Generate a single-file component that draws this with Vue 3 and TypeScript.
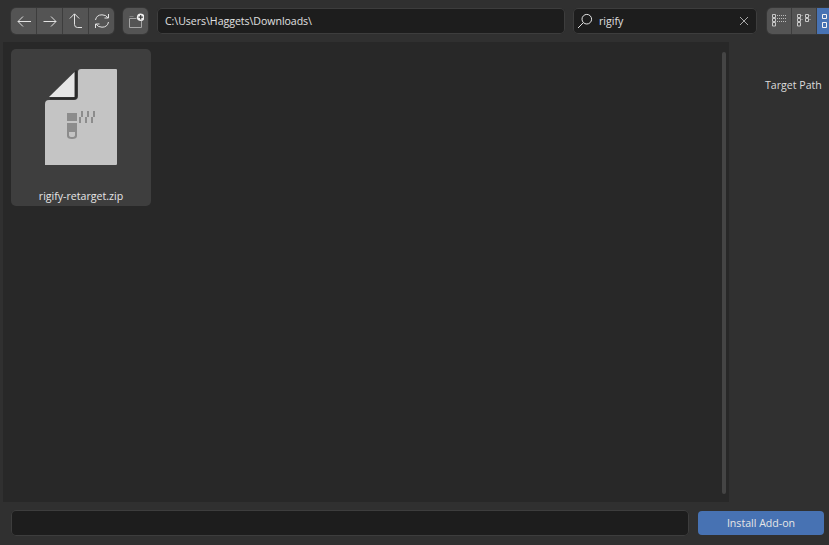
<script setup lang="ts">
const path = 'C:\\Users\\Haggets\\Downloads\\'
</script>

<template>
  <div class="app">
    <header class="topbar">
      <div class="group nav">
        <button class="btn" aria-label="Back">
          <svg class="icon" width="16" height="16" viewBox="0 0 16 16"><path d="M15 8.500H2M7 3.500 2 8.500l5 5" /></svg>
        </button>
        <button class="btn" aria-label="Forward">
          <svg class="icon" width="16" height="16" viewBox="0 0 16 16"><path d="M1.500 8.500h12.500M9 3.500l5 5-5 5" /></svg>
        </button>
        <button class="btn" aria-label="Parent">
          <svg class="icon" width="16" height="16" viewBox="0 0 16 16"><path d="M14 14.500H9.500Q6.500 14.500 6.500 11.500V1M1.800 5.500 6.500 .800 11.200 5.500" /></svg>
        </button>
        <button class="btn" aria-label="Refresh">
          <svg class="icon" width="16" height="16" viewBox="0 0 16 16"><path d="M1.500 7Q2.500 1.800 8 1.800q4 0 6 3M14.500 1v4h-4M14.500 9Q13.500 14.200 8 14.200q-4 0-6-3M1.500 15v-4h4" /></svg>
        </button>
      </div>
      <button class="btn single" aria-label="New folder">
        <svg class="icon" width="16" height="16" viewBox="0 0 16 16">
          <path class="folder" d="M1.500 5.500v9h12V8M1.500 5.500h7" />
          <path class="folder faint" d="M1.500 3.500h4" />
          <circle class="badge" cx="12.700" cy="4.200" r="3.800" />
          <path class="badge-plus" d="M12.700 2v4.400M10.500 4.200h4.400" />
        </svg>
      </button>
      <div class="field path">{{ path }}</div>
      <div class="field search">
        <svg class="icon glass" width="16" height="16" viewBox="0 0 16 16"><circle cx="9.800" cy="6.200" r="4.800" /><path d="M6.300 9.700 1 15" /></svg>
        <span class="query">rigify</span>
        <svg class="icon clear" width="10" height="10" viewBox="0 0 10 10"><path d="M1 1l8 8M9 1 1 9" /></svg>
      </div>
      <div class="group views">
        <button class="btn view" aria-label="Short list">
          <svg class="icon" width="16" height="16" viewBox="0 0 16 16">
            <path class="soft" d="M1.500 1.500h3v3h-3zM1.500 5.500h3v3h-3zM1.500 9.500h3v3.500h-3z" />
            <path class="dots" d="M6 2.500h9M6 5.500h9M6 8.500h9" />
          </svg>
        </button>
        <button class="btn view" aria-label="Long list">
          <svg class="icon" width="16" height="16" viewBox="0 0 16 16">
            <path class="soft" d="M1.500 1.500h3v3h-3zM1.500 5.500h3v3h-3zM1.500 9.500h3v3.500h-3zM9.500 1.500h3v3h-3zM9.500 5.500h3v3h-3z" />
            <path class="dots" d="M5.500 2.500h2M5.500 6.500h2M13.500 2.500h2M13.500 6.500h2" />
          </svg>
        </button>
        <button class="btn view active" aria-label="Thumbnails">
          <svg class="icon" width="16" height="16" viewBox="0 0 16 16"><path class="bright" d="M1.500 1.500h4v4h-4zM1.500 9.500h4v5h-4z" /></svg>
        </button>
      </div>
    </header>

    <div class="middle">
      <main class="files">
        <article class="tile">
          <svg class="doc" width="72" height="96" viewBox="0 0 72 96">
            <path class="paper" d="M0 96V35Q0 31 4 31H29Q33 31 33 27V3Q33 0 36 0H71Q72 0 72 1V95Q72 96 71 96Z" />
            <path class="fold-line" d="M31 1.500V27Q31 29.500 28.500 29.500H5" />
            <path class="fold" d="M4 28 29.500 3V28Z" />
            <g class="zip">
              <rect x="22" y="44" width="10" height="8" />
              <rect x="22" y="54" width="10" height="9" />
              <path d="M22 63h2v3q0 2 3 2t3-2v-3h2v4q0 3-5 3t-5-3Z" />
              <rect x="36" y="42" width="2" height="6" />
              <rect x="42" y="42" width="2" height="6" />
              <rect x="48" y="42" width="2" height="6" />
              <rect x="34" y="48" width="2" height="6" />
              <rect x="40" y="48" width="2" height="6" />
              <rect x="46" y="48" width="2" height="6" />
            </g>
          </svg>
          <span class="name">rigify-retarget.zip</span>
        </article>
        <div class="scrollbar"></div>
      </main>
      <aside class="side">Target Path</aside>
    </div>

    <footer class="bottom">
      <div class="field filename"></div>
      <button class="install">Install Add-on</button>
    </footer>
  </div>
</template>

<style>
html, body { margin: 0; background: #303030; overflow: hidden; }
</style>

<style scoped>
.app {
  width: 829px;
  height: 545px;
  display: flex;
  flex-direction: column;
  overflow: hidden;
  background: #303030;
  font-family: "Open Sans", "DejaVu Sans", sans-serif;
  font-size: 10.6px;
  color: #dcdcdc;
}
svg { display: block; flex: none; }
.icon path, .icon circle { fill: none; stroke: #e2e2e2; stroke-width: 1; }

.topbar {
  height: 42px;
  flex: none;
  box-sizing: border-box;
  padding: 8px 0 0 11px;
  display: flex;
  align-items: flex-start;
}
.topbar > * { flex: none; }
.group { display: flex; border-radius: 5px; overflow: hidden; box-shadow: 0 0 0 1px #373737; }
.btn {
  box-sizing: border-box;
  flex: none;
  width: 26px;
  height: 26px;
  padding: 0;
  border: 0;
  background: #545454;
  display: flex;
  align-items: center;
  justify-content: center;
}
.group .btn + .btn { border-left: 1px solid #3d3d3d; }
.nav .btn:first-child { width: 25px; }
.single {
  width: 25px;
  margin-left: 9px;
  padding-left: 5px;
  justify-content: flex-start;
  border-radius: 5px;
  box-shadow: 0 0 0 1px #373737;
}
.icon .soft { stroke: #c8c8c8; }
.icon .folder { stroke: #a6a6a6; }
.icon .faint { stroke: #808080; }
.icon .badge { fill: #f0f0f0; stroke: none; }
.icon .badge-plus { stroke: #3a3a3a; stroke-width: 1.2; }
.icon .dots { stroke: #bcbcbc; stroke-dasharray: 1 1; }
.icon .bright { stroke: #f2f2f2; }

.field {
  box-sizing: border-box;
  height: 26px;
  background: #1d1d1d;
  border-radius: 5px;
  box-shadow: inset 0 0 0 1px #3d3d3d;
  display: flex;
  align-items: center;
  color: #e0e0e0;
}
.path { width: 408px; margin-left: 9px; padding-left: 8px; letter-spacing: -0.05px; }
.search { width: 184px; margin-left: 8px; padding: 0 8px 0 4px; }
.glass { margin-right: 6px; }
.query { flex: 1; }
.clear path { stroke: #a8a8a8; }
.views { margin-left: 10px; }
.view { width: 25px; padding-left: 4px; justify-content: flex-start; }
.views .view:first-child { width: 24px; }
.active { background: #4772b3; width: 26px; }

.middle { flex: 1; display: flex; min-height: 0; }
.files {
  position: relative;
  width: 726px;
  margin-left: 3px;
  background: #282828;
  box-sizing: border-box;
  padding: 7px 0 0 8px;
}
.tile {
  width: 140px;
  height: 157px;
  background: #3e3e3e;
  border-radius: 5px;
  display: flex;
  flex-direction: column;
  align-items: center;
}
.doc { margin-top: 20px; }
.paper { fill: #c4c4c4; }
.fold { fill: #e6e6e6; }
.fold-line { fill: none; stroke: #2a2a2a; stroke-width: 2; }
.zip rect, .zip path { fill: #8c8c8c; }
.name { margin-top: 24px; color: #e6e6e6; }
.scrollbar {
  position: absolute;
  right: 3px;
  top: 10px;
  bottom: 8px;
  width: 4px;
  border-radius: 2px;
  background: #454545;
}
.side { padding: 36px 0 0 36px; white-space: nowrap; }

.bottom {
  height: 43px;
  flex: none;
  box-sizing: border-box;
  padding: 8px 5px 0 11px;
  display: flex;
  align-items: flex-start;
}
.filename { width: 678px; }
.install {
  width: 126px;
  height: 24px;
  margin: 1px 0 0 9px;
  padding: 0;
  border: 0;
  border-radius: 4px;
  background: #4772b3;
  color: #e6e6e6;
  font: inherit;
}
</style>
